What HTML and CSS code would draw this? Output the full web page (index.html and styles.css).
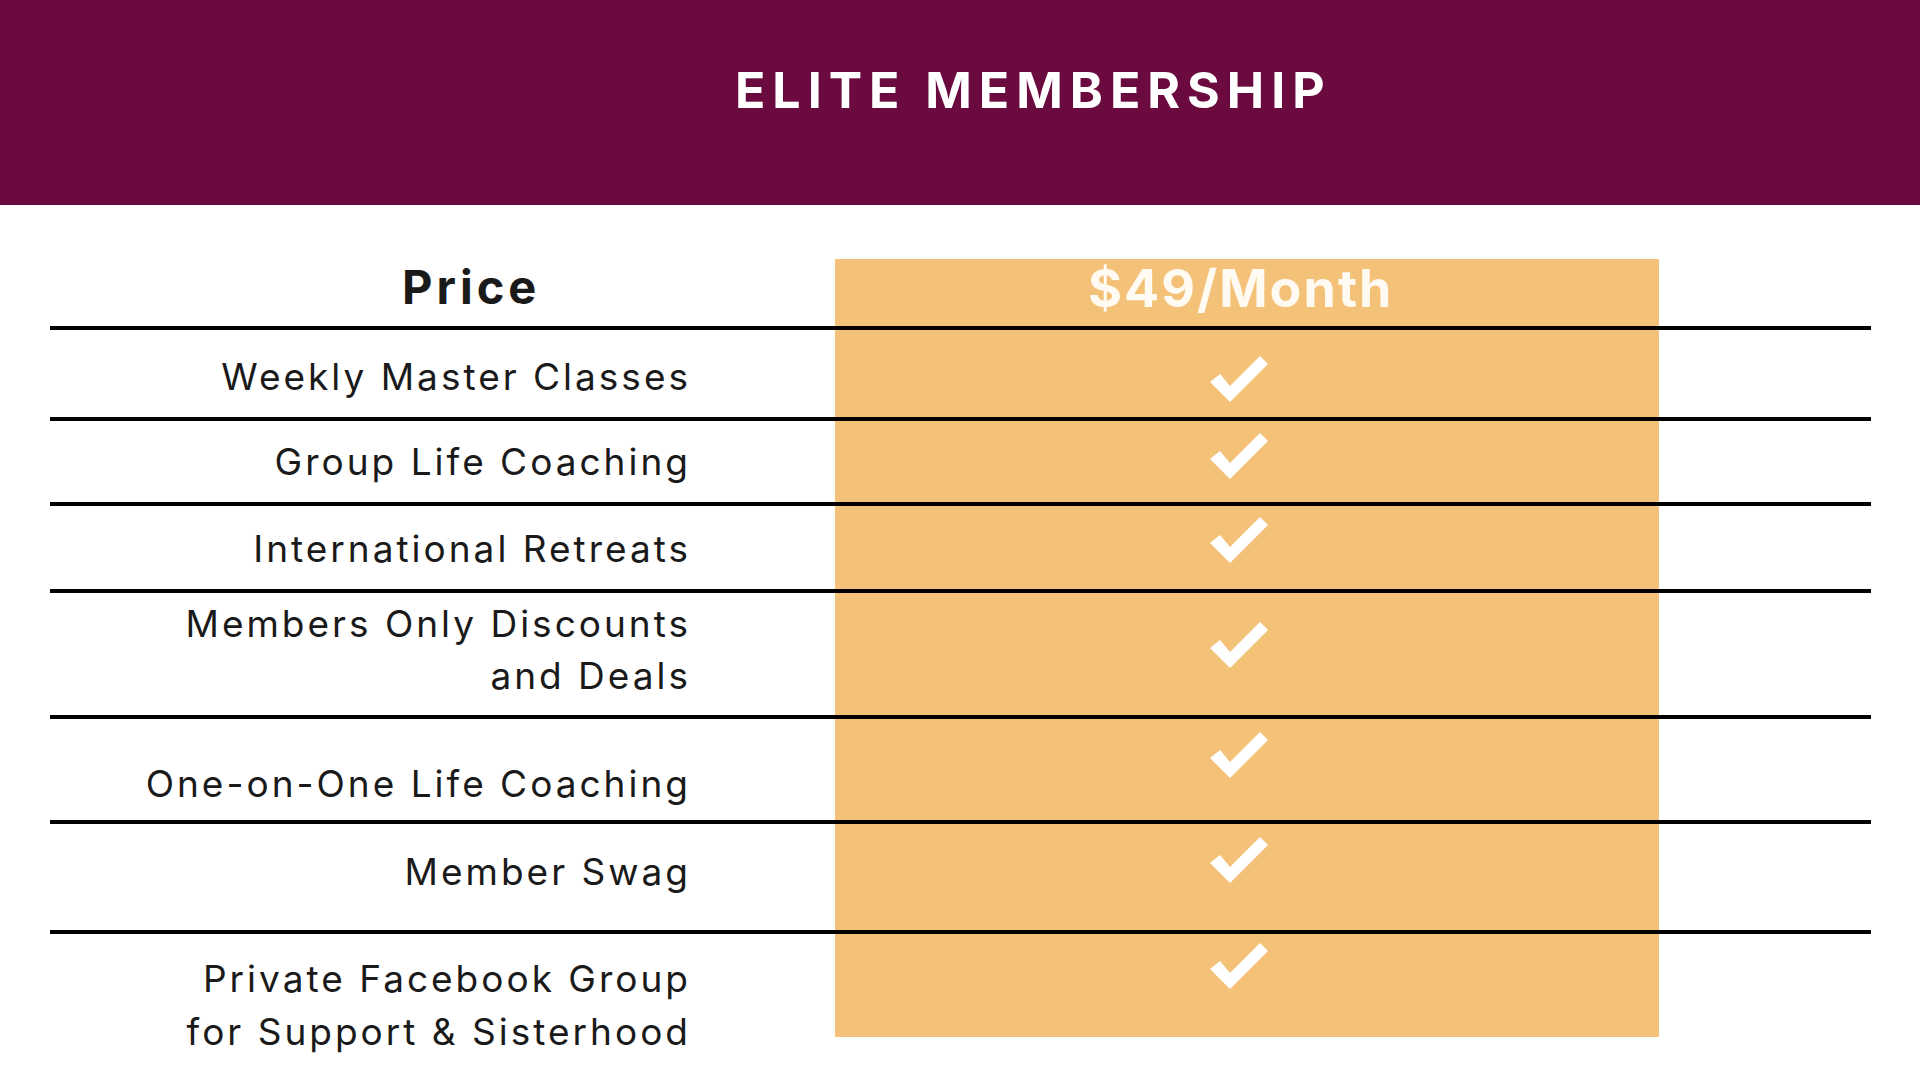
FILE: index.html
```html
<!DOCTYPE html>
<html lang="en">
<head>
<meta charset="utf-8">
<title>Elite Membership</title>
<link rel="stylesheet" href="styles.css">
</head>
<body>
<header class="banner">
  <h1 class="banner-title">ELITE MEMBERSHIP</h1>
</header>
<section class="compare">
  <div class="row r0">
    <div class="label label-head">Price</div>
    <div class="plan plan-head">$49/Month</div>
    <div class="spacer"></div>
  </div>
  <div class="row r1">
    <div class="label">Weekly Master Classes</div>
    <div class="plan"><svg class="check" viewBox="0 0 58 46"><polygon points="0,26 10,18 20,30 50,0 58,8 20,46"/></svg></div>
    <div class="spacer"></div>
  </div>
  <div class="row r2">
    <div class="label">Group Life Coaching</div>
    <div class="plan"><svg class="check" viewBox="0 0 58 46"><polygon points="0,26 10,18 20,30 50,0 58,8 20,46"/></svg></div>
    <div class="spacer"></div>
  </div>
  <div class="row r3">
    <div class="label">International Retreats</div>
    <div class="plan"><svg class="check" viewBox="0 0 58 46"><polygon points="0,26 10,18 20,30 50,0 58,8 20,46"/></svg></div>
    <div class="spacer"></div>
  </div>
  <div class="row r4">
    <div class="label">Members Only Discounts<br>and Deals</div>
    <div class="plan"><svg class="check" viewBox="0 0 58 46"><polygon points="0,26 10,18 20,30 50,0 58,8 20,46"/></svg></div>
    <div class="spacer"></div>
  </div>
  <div class="row r5">
    <div class="label">One-on-One Life Coaching</div>
    <div class="plan"><svg class="check" viewBox="0 0 58 46"><polygon points="0,26 10,18 20,30 50,0 58,8 20,46"/></svg></div>
    <div class="spacer"></div>
  </div>
  <div class="row r6">
    <div class="label">Member Swag</div>
    <div class="plan"><svg class="check" viewBox="0 0 58 46"><polygon points="0,26 10,18 20,30 50,0 58,8 20,46"/></svg></div>
    <div class="spacer"></div>
  </div>
  <div class="row r7">
    <div class="label label-tall">Private Facebook Group<br>for Support &amp; Sisterhood</div>
    <div class="plan"><svg class="check" viewBox="0 0 58 46"><polygon points="0,26 10,18 20,30 50,0 58,8 20,46"/></svg></div>
    <div class="spacer"></div>
  </div>
</section>
</body>
</html>
```

FILE: styles.css
```css
html, body {
  margin: 0;
  padding: 0;
  background: #ffffff;
}

body {
  width: 1920px;
  height: 1080px;
  overflow: hidden;
  font-family: "Inter", "Liberation Sans", sans-serif;
  color: #1a1a1a;
}

.banner {
  height: 205px;
  background: #6a0a3e;
  padding-top: 60px;
  box-sizing: border-box;
}

.banner-title {
  margin: 0;
  padding-left: 735px;
  font-size: 50px;
  line-height: 60px;
  font-weight: 700;
  letter-spacing: 7px;
  color: #ffffff;
}

.compare {
  margin: 54px 0 0 50px;
  width: 1821px;
}

.row {
  display: grid;
  grid-template-columns: 785px 824px 212px;
  grid-template-rows: 100%;
  border-bottom: 4px solid #000000;
  box-sizing: content-box;
}

.row:last-child {
  border-bottom: none;
}

.label {
  box-sizing: border-box;
  text-align: right;
  padding-right: 144px;
  font-size: 37px;
  line-height: 52px;
  letter-spacing: 3px;
  font-weight: 400;
  white-space: nowrap;
}

.label-tall {
  line-height: 53px;
}

.label-head {
  text-align: left;
  padding: 0 0 0 352px;
  font-size: 47px;
  line-height: 56px;
  font-weight: 700;
  letter-spacing: 4px;
  color: #1a1a1a;
}

.plan {
  box-sizing: border-box;
  background: #f3c178;
  padding-left: 375px;
}

.plan-head {
  padding-left: 253px;
  padding-top: 2px;
  font-size: 52px;
  line-height: 56px;
  font-weight: 700;
  letter-spacing: 2px;
  color: #fffaf2;
}

.check {
  display: block;
  width: 58px;
  height: 46px;
  fill: #ffffff;
}

.r0 { height: 67px; }
.r1 { height: 87px; }
.r2 { height: 81px; }
.r3 { height: 83px; }
.r4 { height: 122px; }
.r5 { height: 101px; }
.r6 { height: 106px; }
.r7 { height: 103px; }

.r1 .label { padding-top: 21px; }
.r2 .label { padding-top: 15px; }
.r3 .label { padding-top: 17px; }
.r4 .label { padding-top: 5px; }
.r5 .label { padding-top: 39px; }
.r6 .label { padding-top: 22px; }
.r7 .label { padding-top: 18px; }

.r1 .plan { padding-top: 26px; }
.r2 .plan { padding-top: 12px; }
.r3 .plan { padding-top: 11px; }
.r4 .plan { padding-top: 29px; }
.r5 .plan { padding-top: 13px; }
.r6 .plan { padding-top: 13px; }
.r7 .plan { padding-top: 9px; }
```
